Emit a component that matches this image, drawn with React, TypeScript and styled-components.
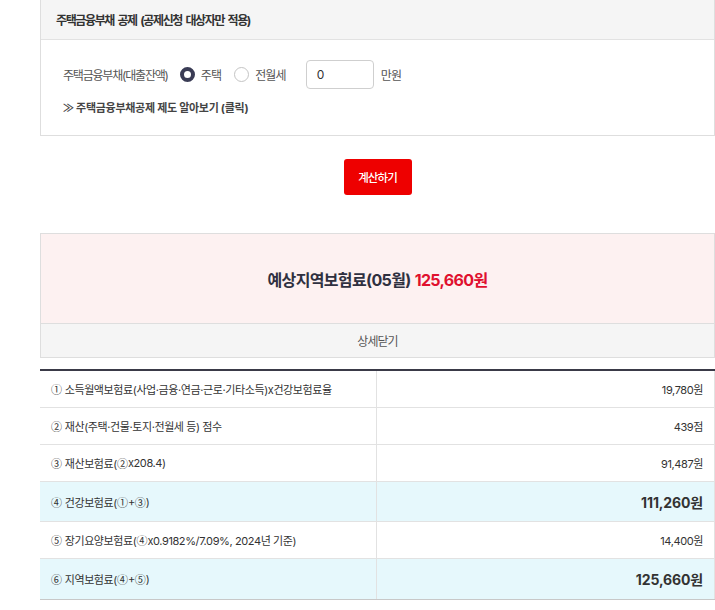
import React from "react";
import styled, { createGlobalStyle } from "styled-components";

const GlobalStyle = createGlobalStyle`
  html, body { margin: 0; padding: 0; background: #fff; }
  body {
    font-family: "Inter", "Noto Sans CJK KR", "Noto Sans", sans-serif;
    color: #333;
    letter-spacing: -0.04em;
  }
  * { box-sizing: border-box; }
`;

const Page = styled.div`
  margin-left: 40px;
  width: 675px;
  display: flex;
  flex-direction: column;
`;

const DeductionBox = styled.section`
  border: 1px solid #dedede;
  border-top: none;
`;

const BoxHeader = styled.div`
  height: 40px;
  background: #f5f5f5;
  border-bottom: 1px solid #e2e2e2;
  display: flex;
  align-items: center;
  padding-left: 15px;
  font-size: 12px;
  letter-spacing: -0.115em;
  word-spacing: 2px;
  font-weight: 700;
  color: #333;
`;

const BoxBody = styled.div`
  padding: 20px 22px 19px;
  display: flex;
  flex-direction: column;
  gap: 11px;
`;

const FieldRow = styled.div`
  display: flex;
  align-items: center;
  height: 29px;
  font-size: 12px;
  letter-spacing: -0.07em;
  color: #555;
`;

const FieldLabel = styled.span`
  margin-right: 12px;
  letter-spacing: -0.1em;
`;

const RadioOption = styled.label`
  display: flex;
  align-items: center;
  gap: 6px;
  margin-right: 13px;
  color: #555;
`;

const RadioDot = styled.span<{ $checked?: boolean }>`
  width: 15px;
  height: 15px;
  border-radius: 50%;
  background: #fff;
  border: ${(p) => (p.$checked ? "4.5px solid #3a3c55" : "1px solid #c4c4c4")};
`;

const AmountInput = styled.div`
  width: 68px;
  height: 29px;
  border: 1px solid #cfcfcf;
  border-radius: 4px;
  display: flex;
  align-items: center;
  padding-left: 10px;
  margin-left: 7px;
  margin-right: 7px;
  font-size: 12px;
  color: #333;
`;

const InfoLink = styled.a`
  font-size: 11px;
  font-weight: 700;
  letter-spacing: -0.025em;
  color: #444;
  text-decoration: none;
  line-height: 16px;
`;

const ButtonRow = styled.div`
  display: flex;
  justify-content: center;
  padding: 23px 0 38px;
`;

const CalcButton = styled.button`
  width: 68px;
  height: 36px;
  border: none;
  border-radius: 3px;
  background: #ee0000;
  color: #fff;
  font-family: inherit;
  letter-spacing: -0.08em;
  font-size: 11.5px;
  font-weight: 500;
  padding: 0;
`;

const ResultBox = styled.section`
  border: 1px solid #dedede;
`;

const ResultSummary = styled.div`
  height: 90px;
  background: #fdf1f1;
  display: flex;
  align-items: center;
  justify-content: center;
  font-size: 16px;
  letter-spacing: -0.04em;
  font-weight: 700;
  color: #2f3040;
  border-bottom: 1px solid #dedede;
  gap: 4px;
`;

const Amount = styled.span`
  color: #e0102e;
`;

const DetailToggle = styled.div`
  height: 33px;
  background: #f5f5f5;
  display: flex;
  align-items: center;
  justify-content: center;
  font-size: 12px;
  letter-spacing: -0.08em;
  color: #555;
`;

const DetailTable = styled.div`
  margin-top: 11px;
  border-top: 2px solid #3a3a48;
  border-bottom: 1px solid #c8c8c8;
  display: grid;
  grid-template-columns: 337px 1fr;
`;

const Cell = styled.div<{ $highlight?: boolean; $value?: boolean; $last?: boolean }>`
  height: ${(p) => (p.$highlight ? "40px" : "37px")};
  background: ${(p) => (p.$highlight ? "#e6f8fc" : "#fff")};
  border-bottom: ${(p) => (p.$last ? "none" : "1px solid #e2e2e2")};
  border-right: 1px solid #e2e2e2;
  display: flex;
  align-items: center;
  justify-content: ${(p) => (p.$value ? "flex-end" : "flex-start")};
  padding: ${(p) => (p.$value ? "0 11px 0 0" : "0 0 0 11px")};
  font-size: ${(p) => (p.$value && p.$highlight ? "14px" : "11px")};
  font-weight: ${(p) => (p.$value && p.$highlight ? 700 : 400)};
  letter-spacing: ${(p) => (p.$value && p.$highlight ? "-0.01em" : "-0.036em")};
  color: #333;
  white-space: pre;
`;

const CircledMark = styled.span`
  font-family: "Noto Sans CJK KR", sans-serif;
  letter-spacing: 0;
`;

const withMarks = (text: string) =>
  text.split(/([①②③④⑤⑥])/).map((part, i) =>
    /[①②③④⑤⑥]/.test(part) ? <CircledMark key={i}>{part}</CircledMark> : part
  );

const rows = [
  { label: "① 소득월액보험료(사업·금융·연금·근로·기타소득)x건강보험료율", value: "19,780원" },
  { label: "② 재산(주택·건물·토지·전월세 등) 점수", value: "439점" },
  { label: "③ 재산보험료(②x208.4)", value: "91,487원" },
  { label: "④ 건강보험료(①+③)", value: "111,260원", highlight: true },
  { label: "⑤ 장기요양보험료(④x0.9182%/7.09%, 2024년 기준)", value: "14,400원" },
  { label: "⑥ 지역보험료(④+⑤)", value: "125,660원", highlight: true },
];

export default function App() {
  return (
    <>
      <GlobalStyle />
      <Page>
        <DeductionBox>
          <BoxHeader>주택금융부채 공제 (공제신청 대상자만 적용)</BoxHeader>
          <BoxBody>
            <FieldRow>
              <FieldLabel>주택금융부채(대출잔액)</FieldLabel>
              <RadioOption>
                <RadioDot $checked />
                주택
              </RadioOption>
              <RadioOption>
                <RadioDot />
                전월세
              </RadioOption>
              <AmountInput>0</AmountInput>
              만원
            </FieldRow>
            <InfoLink href="#">≫ 주택금융부채공제 제도 알아보기 (클릭)</InfoLink>
          </BoxBody>
        </DeductionBox>
        <ButtonRow>
          <CalcButton>계산하기</CalcButton>
        </ButtonRow>
        <ResultBox>
          <ResultSummary>
            예상지역보험료(05월) <Amount>125,660원</Amount>
          </ResultSummary>
          <DetailToggle>상세닫기</DetailToggle>
        </ResultBox>
        <DetailTable>
          {rows.map((r, i) => (
            <React.Fragment key={i}>
              <Cell $highlight={r.highlight} $last={i === rows.length - 1}>
                {withMarks(r.label)}
              </Cell>
              <Cell $value $highlight={r.highlight} $last={i === rows.length - 1}>
                {r.value}
              </Cell>
            </React.Fragment>
          ))}
        </DetailTable>
      </Page>
    </>
  );
}
